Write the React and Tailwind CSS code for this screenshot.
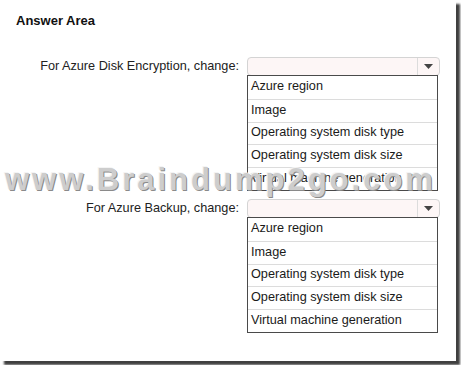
import React from "react";

const options = [
  "Azure region",
  "Image",
  "Operating system disk type",
  "Operating system disk size",
  "Virtual machine generation",
];

const Dropdown = ({ label }) => {
  return (
    <div className="flex items-start">
      <div className="w-[240px] h-[19px] flex items-center justify-end pr-[1px] text-[12.7px] text-[#222]">
        {label}
      </div>
      <div className="ml-[7px] w-[193px]">
        <div className="h-[19px] rounded-[4px] border border-[#d4d4d4] bg-[#fdf6f6] flex">
          <div className="flex-1" />
          <div className="w-[22px] border-l border-[#dcdcdc] flex items-center justify-center">
            <svg width="9" height="5" viewBox="0 0 9 5">
              <path d="M0 0 L9 0 L4.5 5 Z" fill="#444" />
            </svg>
          </div>
        </div>
        <div className="-mt-[1px] w-[191px] border border-[#4a4a4a] bg-white">
          {options.map((o, i) => (
            <div
              key={o}
              className={
                "h-[22.8px] flex items-center pl-[3px] pb-[1px] text-[12.7px] text-[#1a1a1a] " +
                (i > 0 ? "border-t border-[#dcdcdc]" : "")
              }
            >
              {o}
            </div>
          ))}
        </div>
      </div>
    </div>
  );
};

export default function App() {
  return (
    <div className="w-[461px] h-[365px] bg-white relative" style={{ fontFamily: '"Liberation Sans", Arial, sans-serif' }}>
      <div className="w-[456px] h-[361px] bg-white shadow-[4px_4px_2px_rgba(0,0,0,0.75)] pt-[11px]">
        <div className="pl-[16px] h-[19px] text-[13px] font-bold text-[#111]">Answer Area</div>
        <div className="mt-[27px] flex flex-col gap-[8px]">
          <Dropdown label="For Azure Disk Encryption, change:" />
          <Dropdown label="For Azure Backup, change:" />
        </div>
      </div>
      <div className="absolute left-[5px] top-[164px] leading-none text-[31px] font-bold tracking-[3px] text-[#cdcdcd] [text-shadow:1px_1px_0_#8a8a8a,-1px_-1px_0_#f4f4f4] whitespace-nowrap">
        www.Braindump2go.com
      </div>
    </div>
  );
}
